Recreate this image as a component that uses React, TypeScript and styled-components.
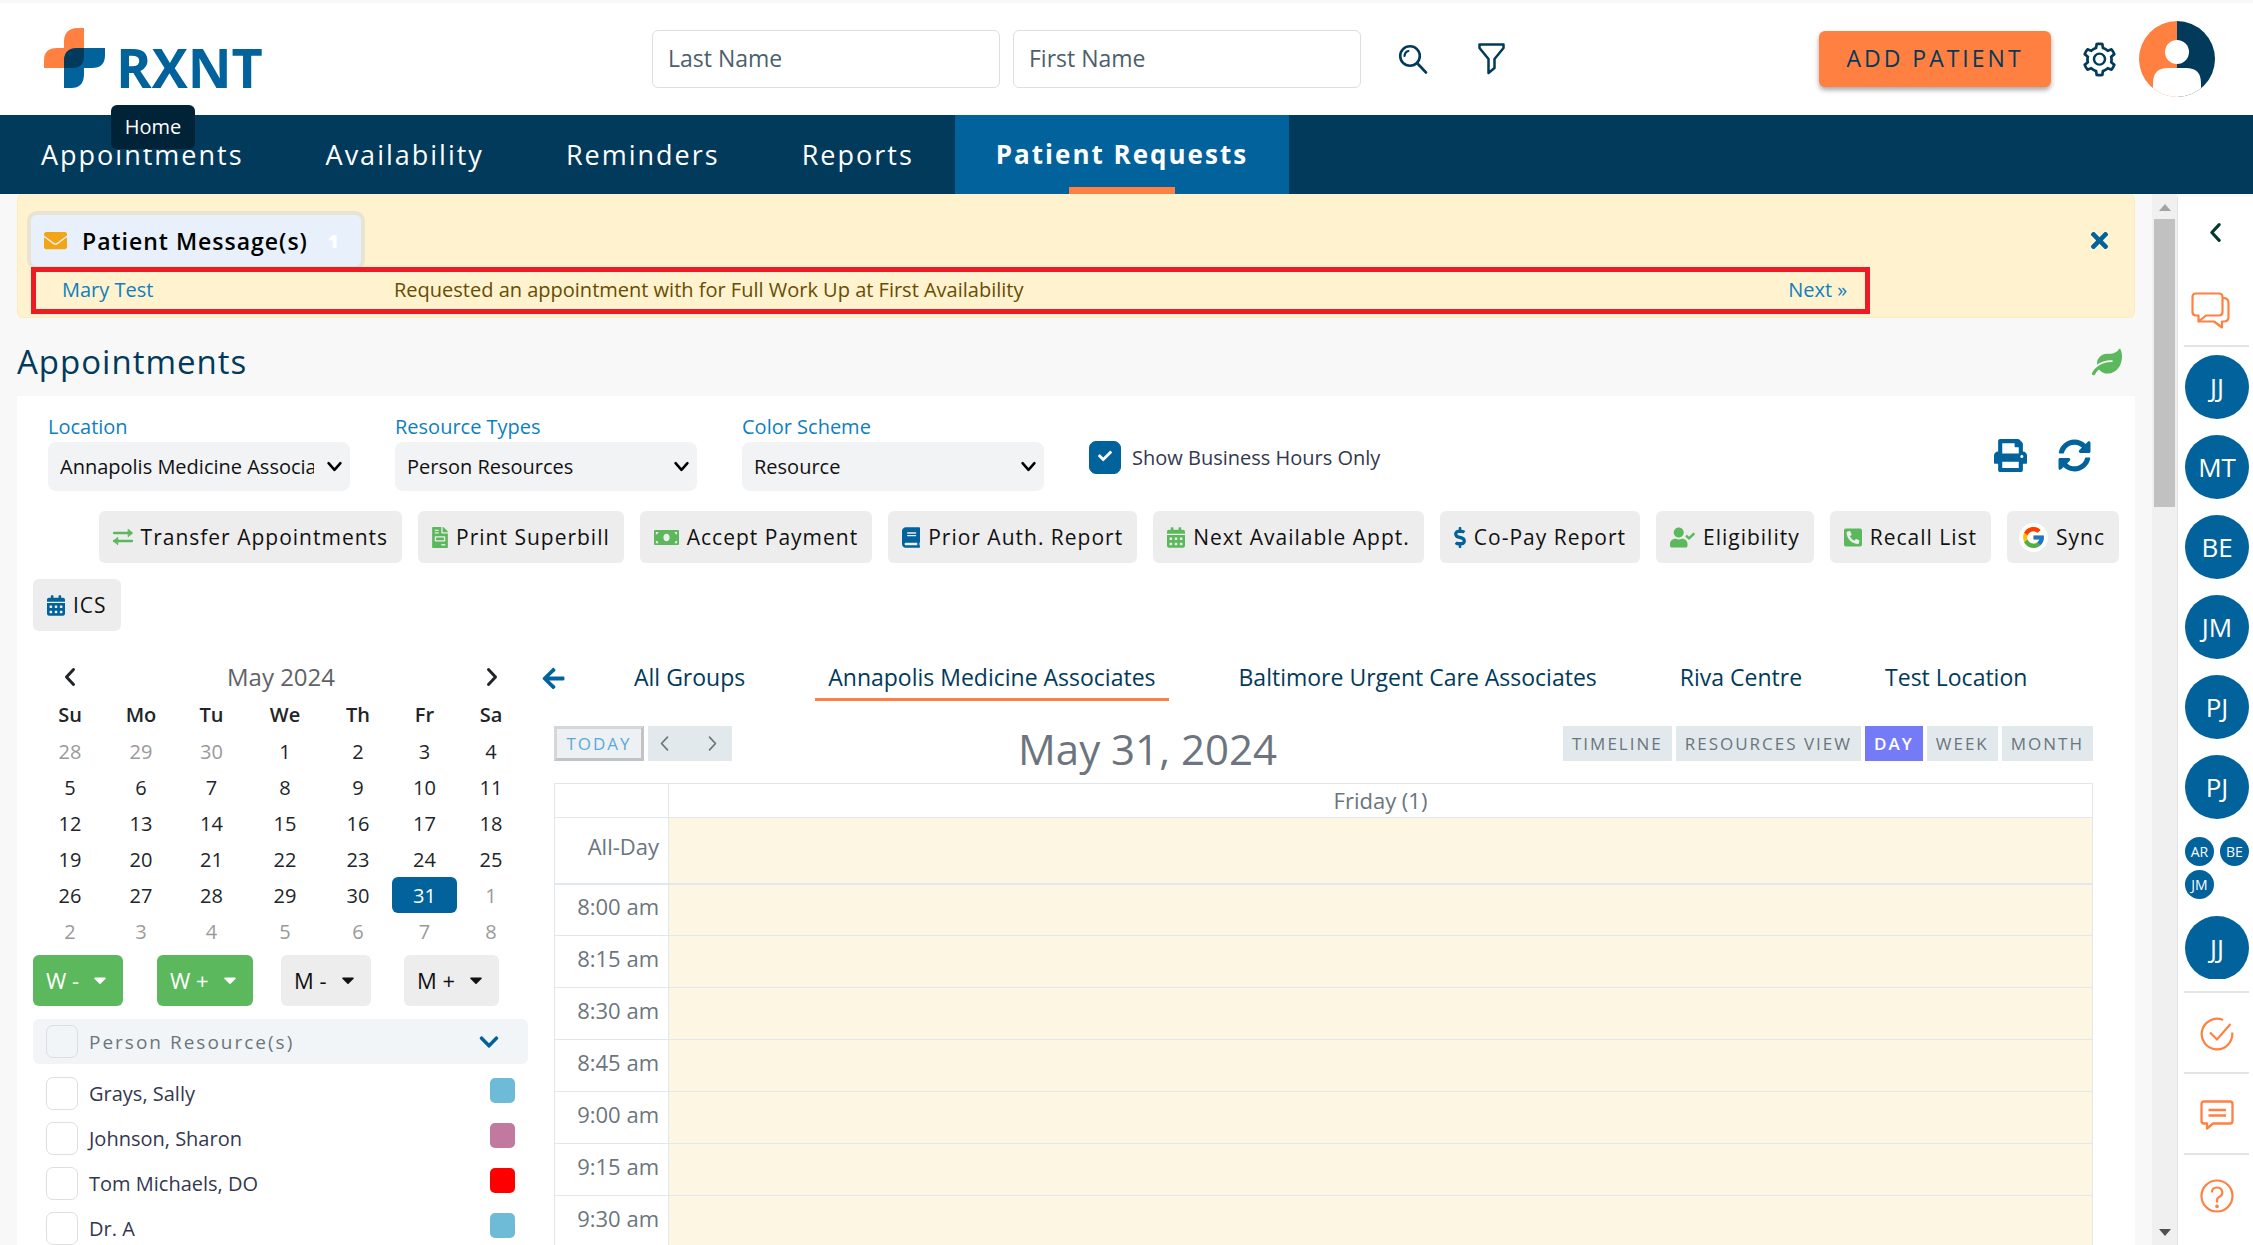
import React from "react";
import styled, { createGlobalStyle } from "styled-components";
import {
  FaArrowLeft, FaBook, FaCalendarAlt, FaCaretDown, FaCheck, FaChevronDown, FaDollarSign,
  FaEnvelope, FaFileInvoice, FaLeaf, FaMoneyBill, FaPhoneSquareAlt, FaPrint, FaSyncAlt, FaTimes, FaUserCheck,
} from "react-icons/fa";
import { FcGoogle } from "react-icons/fc";
import { AiOutlineSetting } from "react-icons/ai";

const c = {
  navy: "#023a5b",
  blue: "#01629c",
  link: "#0f7fc0",
  orange: "#ff8040",
  green: "#5cb85c",
  grey: "#6c757d",
  line: "#e1e8ed",
  cream: "#fdf6e2",
  page: "#f8f8f8",
};

const Global = createGlobalStyle`
  * { box-sizing: border-box; }
  body { margin: 0; background: ${c.page}; color: #212529; }
  body, button, input, select { font-family: "Open Sans", "Noto Sans", sans-serif; }
  button { border: 0; background: none; padding: 0; color: inherit; cursor: pointer; }
  a { color: ${c.link}; text-decoration: none; }
  svg { display: block; flex: none; }
`;

const Shell = styled.div`
  display: flex;
  flex-direction: column;
  height: 100vh;
  overflow: hidden;
`;

const Header = styled.header`
  position: relative;
  flex: none;
  display: grid;
  grid-template-columns: 652px 1fr auto;
  align-items: center;
  height: 115px;
  padding: 0 38px 0 0;
  border-top: 3px solid ${c.page};
  background: #fff;
`;

const Brand = styled.a`
  display: flex;
  gap: 11px;
  padding: 8px 0 0 44px;
  color: ${c.blue};
`;

const BrandName = styled.span`
  margin-top: 8px;
  font-size: 54px;
  font-weight: 700;
  line-height: 62px;
`;

const Tooltip = styled.div`
  position: absolute;
  z-index: 2;
  left: 111px;
  top: 102px;
  width: 84px;
  border-radius: 6px;
  background: #012338;
  color: #fff;
  font-size: 20px;
  line-height: 44px;
  text-align: center;
`;

const Search = styled.form`
  display: flex;
  align-items: center;
  gap: 13px;
`;

const SearchInput = styled.input`
  width: 348px;
  height: 58px;
  padding: 0 15px 2px;
  border: 1px solid #dcdee0;
  border-radius: 6px;
  color: ${c.navy};
  font-size: 23px;
  &::placeholder { color: #4c5f6c; opacity: 1; }
`;

const IconButton = styled.button<{ $gap?: number; $color?: string }>`
  display: flex;
  margin-left: ${(p) => p.$gap ?? 0}px;
  color: ${(p) => p.$color ?? c.navy};
`;

const Account = styled.div`
  display: flex;
  align-items: center;
`;

const AddPatient = styled.button`
  width: 232px;
  height: 56px;
  padding-bottom: 2px;
  border-radius: 6px;
  background: ${c.orange};
  box-shadow: 0 3px 5px rgba(0, 0, 0, 0.35);
  color: ${c.navy};
  font-size: 23px;
  font-weight: 500;
  letter-spacing: 3px;
`;

const Nav = styled.nav`
  flex: none;
  display: flex;
  height: 79px;
  background: ${c.navy};
`;

const NavLink = styled.a<{ $active?: boolean }>`
  display: flex;
  flex-direction: column;
  align-items: center;
  justify-content: space-between;
  padding: 0 41px;
  background: ${(p) => (p.$active ? c.blue : "transparent")};
  color: #fff;
  font-size: ${(p) => (p.$active ? 26 : 27)}px;
  font-weight: ${(p) => (p.$active ? 700 : 400)};
  letter-spacing: 2px;
  line-height: 79px;
  &::after {
    content: "";
    width: 106px;
    height: 7px;
    margin-top: -7px;
    background: ${(p) => (p.$active ? c.orange : "transparent")};
  }
`;

const Body = styled.div`
  flex: 1;
  min-height: 0;
  display: grid;
  grid-template-columns: minmax(0, 1fr) 25px 76px;
`;

const Main = styled.main`
  min-height: 0;
  overflow: hidden;
  padding: 0 17px;
`;

const Alert = styled.section`
  height: 124px;
  padding: 20px 13px 0;
  border: 1px solid #ffeabb;
  border-top: 0;
  border-radius: 6px;
  background: #fff2ce;
`;

const AlertTop = styled.div`
  display: flex;
  align-items: center;
  justify-content: space-between;
  height: 53px;
  padding-right: 9px;
`;

const AlertTab = styled.button`
  display: flex;
  align-items: center;
  width: 330px;
  height: 51px;
  padding: 0 13px;
  border-radius: 6px;
  background: #e8f1fb;
  box-shadow: 0 0 0 4px #e8e3d2;
  color: #000;
  font-size: 23px;
  font-weight: 600;
  letter-spacing: 1px;
  span { margin-left: 15px; }
`;

const Count = styled.b`
  margin-left: 20px;
  color: #fff;
  font-size: 18px;
`;

const MessageRow = styled.div`
  position: relative;
  display: grid;
  grid-template-columns: 332px 1fr auto;
  align-items: center;
  width: 88%;
  height: 47px;
  padding: 0 18px 3px 26px;
  border: 5px solid #ed1c24;
  background: #fff2ce;
  color: #664d03;
  font-size: 20px;
`;

const TitleRow = styled.div`
  display: flex;
  align-items: center;
  justify-content: space-between;
  height: 78px;
  padding: 10px 13px 0 0;
`;

const Title = styled.h1`
  margin: 0;
  color: ${c.navy};
  font-size: 33px;
  font-weight: 500;
  line-height: 40px;
  letter-spacing: 1px;
`;

const Panel = styled.section`
  padding: 16px 16px 0;
  background: #fff;
`;

const Filters = styled.div`
  display: flex;
  align-items: flex-start;
  gap: 45px;
  padding: 0 28px 0 15px;
`;

const Field = styled.label`
  display: flex;
  flex-direction: column;
  width: 302px;
  color: ${c.link};
  font-size: 20px;
  line-height: 30px;
`;

const SelectBox = styled.span`
  position: relative;
  display: block;
  color: #000;
  svg { position: absolute; right: 7px; top: 16px; pointer-events: none; }
`;

const Select = styled.select`
  width: 100%;
  height: 49px;
  padding: 0 36px 0 12px;
  border: 0;
  border-radius: 8px;
  background: #f1f3f5;
  appearance: none;
  color: #111;
  font-size: 20px;
`;

const CheckLabel = styled.label<{ $spaced?: boolean; $muted?: boolean }>`
  display: flex;
  align-items: center;
  gap: 11px;
  color: ${(p) => (p.$muted ? c.grey : "#33384f")};
  font-size: ${(p) => (p.$muted ? 19 : 20)}px;
  letter-spacing: ${(p) => (p.$muted ? 2 : 0)}px;
  margin-top: ${(p) => (p.$spaced ? 29 : 0)}px;
`;

const Tick = styled.span<{ $clear?: boolean }>`
  position: relative;
  display: flex;
  width: 32px;
  height: 33px;
  input {
    width: 100%;
    height: 100%;
    margin: 0;
    appearance: none;
    border: 1px solid #dcdee0;
    border-radius: 7px;
    background: ${(p) => (p.$clear ? "transparent" : "#fff")};
  }
  input:checked { border-color: ${c.blue}; background: ${c.blue}; }
  svg { position: absolute; left: 9px; top: 8px; color: #fff; }
`;

const PanelTools = styled.div`
  display: flex;
  gap: 31px;
  margin: 27px 0 0 auto;
`;

const Actions = styled.div<{ $end?: boolean }>`
  display: flex;
  justify-content: ${(p) => (p.$end ? "flex-end" : "flex-start")};
  gap: 16px;
  margin-top: ${(p) => (p.$end ? 20 : 16)}px;
`;

const Action = styled.button<{ $tint?: string; $glyph: number; $flush?: boolean }>`
  display: flex;
  align-items: center;
  gap: 8px;
  height: 52px;
  padding: 0 14px 0 ${(p) => (p.$flush ? 12 : 14)}px;
  border-radius: 6px;
  background: #ededed;
  color: #111;
  font-size: 21px;
  letter-spacing: 1px;
  white-space: nowrap;
  svg { width: ${(p) => p.$glyph}px; color: ${(p) => p.$tint ?? c.green}; }
`;

const GoogleBadge = styled.span`
  padding: 2px;
  border-radius: 50%;
  background: #fff;
`;

const Columns = styled.div`
  display: grid;
  grid-template-columns: 495px minmax(0, 1fr);
  gap: 13px;
  margin-top: 25px;
`;

const MonthHead = styled.div`
  display: flex;
  align-items: center;
  justify-content: space-between;
  height: 41px;
  padding: 0 26px 0 27px;
  color: #5f6368;
  font-size: 24px;
`;

const MonthTable = styled.table`
  width: 490px;
  margin-left: 2px;
  border-collapse: collapse;
  table-layout: fixed;
  font-size: 20px;
  text-align: center;
  th, td { height: 36px; padding: 0; line-height: 36px; }
  th { font-weight: 600; }
`;

const Day = styled.button<{ $outside?: boolean; $chosen?: boolean }>`
  display: block;
  width: 100%;
  height: 36px;
  border-radius: 6px;
  background: ${(p) => (p.$chosen ? c.blue : "transparent")};
  color: ${(p) => (p.$chosen ? "#fff" : p.$outside ? "#9a9a9a" : "#212529")};
  font-size: 20px;
`;

const Jumps = styled.div`
  display: grid;
  grid-template-columns: 124px 124px 123px 124px;
  justify-items: start;
  padding-top: 6px;
`;

const Jump = styled.button<{ $green?: boolean }>`
  display: flex;
  align-items: center;
  gap: 11px;
  height: 51px;
  padding: 0 13px 2px;
  border-radius: 6px;
  background: ${(p) => (p.$green ? c.green : "#ededed")};
  color: ${(p) => (p.$green ? "#fff" : "#111")};
  font-size: 22px;
`;

const ResourceHead = styled.div`
  display: flex;
  align-items: center;
  justify-content: space-between;
  height: 45px;
  margin-top: 13px;
  padding: 0 28px 0 13px;
  border-radius: 6px;
  background: #f1f5f7;
`;

const ResourceList = styled.ul`
  margin: 7px 0 0;
  padding: 0 13px;
  list-style: none;
`;

const ResourceItem = styled.li`
  display: flex;
  align-items: center;
  justify-content: space-between;
  height: 45px;
`;

const Swatch = styled.i<{ $fill: string }>`
  width: 25px;
  height: 25px;
  margin-bottom: 7px;
  border-radius: 5px;
  background: ${(p) => p.$fill};
`;

const Tabs = styled.div`
  display: flex;
  align-items: center;
  height: 45px;
`;

const TabList = styled.div`
  display: flex;
  gap: 57px;
  margin-left: 55px;
`;

const Tab = styled.button<{ $active?: boolean }>`
  height: 45px;
  padding: 0 13px;
  border-bottom: 3px solid ${(p) => (p.$active ? c.orange : "transparent")};
  color: ${c.navy};
  font-size: 23px;
  font-weight: ${(p) => (p.$active ? 500 : 400)};
  white-space: nowrap;
`;

const Scheduler = styled.div`
  padding: 25px 26px 0 13px;
`;

const Toolbar = styled.div`
  display: flex;
  justify-content: space-between;
  align-items: flex-start;
  height: 57px;
`;

const ToolGroup = styled.div`
  display: flex;
  gap: 4px;
`;

const Tool = styled.button<{ $active?: boolean }>`
  height: 35px;
  padding: 0 9px;
  background: ${(p) => (p.$active ? "#757bf7" : "#e2e9ec")};
  color: ${(p) => (p.$active ? "#fff" : c.grey)};
  font-size: 17px;
  font-weight: ${(p) => (p.$active ? 600 : 400)};
  letter-spacing: 2px;
  white-space: nowrap;
`;

const Today = styled.button`
  width: 90px;
  height: 35px;
  border: 3px solid;
  border-color: #d3d7da #c0c4c7 #c0c4c7 #d3d7da;
  background: #edf1f4;
  color: #5ba8d8;
  font-size: 17px;
  letter-spacing: 2px;
`;

const Pager = styled.div`
  display: flex;
  align-items: center;
  justify-content: space-between;
  width: 84px;
  height: 35px;
  padding: 0 11px 0 8px;
  background: #e2e9ec;
  color: ${c.grey};
`;

const DateTitle = styled.h2`
  margin: 1px 0 0;
  color: ${c.grey};
  font-size: 42px;
  font-weight: 400;
  line-height: 44px;
`;

const Slots = styled.table`
  width: 100%;
  border-collapse: collapse;
  color: ${c.grey};
  font-size: 22px;
  th, td { padding: 0; border: 1px solid ${c.line}; font-weight: 400; }
  th { line-height: 30px; }
  th:first-child { width: 114px; padding-right: 9px; text-align: right; }
  thead tr { height: 34px; }
  thead th { padding-bottom: 2px; }
  tbody td { background: ${c.cream}; }
`;

const SlotRow = styled.tr<{ $allDay?: boolean }>`
  height: ${(p) => (p.$allDay ? 66 : 52)}px;
  th, td { border-bottom-width: ${(p) => (p.$allDay ? 2 : 1)}px; }
  th { padding-bottom: 8px; }
`;

const ScrollTrack = styled.div`
  display: flex;
  flex-direction: column;
  justify-content: space-between;
  align-items: center;
  padding: 10px 0 9px;
  background: #f0f0f0;
`;

const ScrollThumb = styled.div`
  width: 21px;
  height: 288px;
  margin: 8px 0 auto;
  background: #c1c1c1;
`;

const Rail = styled.aside`
  display: flex;
  flex-direction: column;
  min-height: 0;
  margin-top: 3px;
  padding: 25px 4px 0 6px;
  border-left: 1px solid #e4e4e4;
  background: #fff;
  color: ${c.orange};
`;

const RailTop = styled.div`
  display: flex;
  flex-direction: column;
  gap: 49px;
  height: 125px;
  border-bottom: 2px solid #e4e4e4;
  padding-left: 7px;
  button:first-child { margin-left: 14px; }
`;

const People = styled.div`
  display: grid;
  justify-items: end;
  align-content: start;
  gap: 16px;
  height: 632px;
  padding-top: 8px;
  overflow: hidden;
`;

const Person = styled.button<{ $small?: boolean }>`
  width: ${(p) => (p.$small ? 29 : 64)}px;
  height: ${(p) => (p.$small ? 29 : 64)}px;
  border-radius: 50%;
  background: ${c.blue};
  color: #fff;
  font-size: ${(p) => (p.$small ? 14 : 26)}px;
`;

const Cluster = styled.div`
  display: grid;
  grid-template-columns: 29px 29px;
  gap: 3px 6px;
  height: 65px;
  padding-top: 2px;
`;

const RailItem = styled.button`
  display: flex;
  align-items: center;
  justify-content: center;
  height: 81px;
  padding-top: 2px;
  border-top: 2px solid #e4e4e4;
  color: ${c.orange};
`;

const RailEnd = styled.div`
  display: flex;
  flex-direction: column;
  padding-top: 12px;
`;

const LogoMark = () => (
  <svg width="61" height="60" viewBox="0 0 61 60" aria-hidden="true">
    <path fill={c.orange} d="M20 20V14Q20 0 34 0H40V40H0V32Q0 20 13 20Z" />
    <path fill={c.blue} d="M34 20H61V27Q61 40 48 40H40V46Q40 60 27 60H20V33Q20 20 34 20Z" />
    <path fill={c.navy} d="M34 20H40V28Q40 40 28 40H20V33Q20 20 34 20Z" />
  </svg>
);

const SearchIcon = () => (
  <svg width="30" height="30" viewBox="0 0 30 30" fill="none" stroke="currentColor" strokeWidth="2.6" strokeLinecap="round">
    <circle cx="12" cy="12" r="9.8" />
    <path d="M19 19 28 28.500" />
    <path d="M6.5 12Q7 7.5 10.5 7" strokeWidth="2.2" />
  </svg>
);

const FunnelIcon = () => (
  <svg width="27" height="32" viewBox="0 0 27 32" fill="none" stroke="currentColor" strokeWidth="2.5" strokeLinejoin="round">
    <path d="M1.5 1.5H25.5V5L16.5 16V25L10.5 30V16L1.5 5Z" />
  </svg>
);

const Avatar = () => (
  <svg width="76" height="76" viewBox="0 0 76 76">
    <defs><clipPath id="face"><circle cx="38" cy="38" r="38" /></clipPath></defs>
    <g clipPath="url(#face)">
      <path fill={c.orange} d="M0 0H38V76H0Z" />
      <path fill={c.navy} d="M38 0H76V76H38Z" />
      <circle cx="38" cy="31" r="12" fill="#fff" />
      <path fill="#fff" d="M14 76V62Q14 47 29 47H47Q62 47 62 62V76Z" />
    </g>
  </svg>
);

const SwapIcon = () => (
  <svg height="16" viewBox="0 0 20 16" fill="none" stroke="currentColor" strokeWidth="2.4" strokeLinecap="round" strokeLinejoin="round">
    <path d="M1 4H18M1 12H19" />
    <path fill="currentColor" strokeWidth="1" d="M15.500 .5 19.500 4 15.500 7.500ZM4.500 8.500 .5 12 4.500 15.500Z" />
  </svg>
);

const Chevron = ({ size = 20, dir = "left", weight = 3 }: { size?: number; dir?: "left" | "right" | "down"; weight?: number }) => (
  <svg width={size} height={size} viewBox="0 0 20 20" fill="none" stroke="currentColor" strokeWidth={weight} strokeLinecap="round" strokeLinejoin="round">
    <path d={dir === "left" ? "M13.500 2.500 6.500 10 13.500 17.500" : dir === "right" ? "M6.500 2.500 13.500 10 6.500 17.500" : "M3 6 10 14 17 6"} />
  </svg>
);

const ChatIcon = () => (
  <svg width="39" height="37" viewBox="0 0 39 37" fill="none" stroke="currentColor" strokeWidth="2.200" strokeLinejoin="round">
    <path d="M5 1.500H28Q31.500 1.500 31.500 5V20Q31.500 23.500 28 23.500H15L7.500 29.500V23.500H5Q1.500 23.500 1.500 20V5Q1.500 1.500 5 1.500Z" />
    <path d="M31.500 6H33Q37.500 6.500 37.500 11V25Q37.500 29.500 33 29.500H31V35.500L23 29.500H8" />
  </svg>
);

const DoneIcon = () => (
  <svg width="34" height="34" viewBox="0 0 34 34" fill="none" stroke="currentColor" strokeWidth="2.200">
    <path d="M23 3A15.300 15.300 0 1 0 32.200 15.500" />
    <path d="M10 15.500 17 22.500 30.500 7" />
  </svg>
);

const NoteIcon = () => (
  <svg width="34" height="30" viewBox="0 0 34 30" fill="none" stroke="currentColor" strokeWidth="2.300" strokeLinejoin="round">
    <path d="M4 1.500H30Q32.500 1.500 32.500 4V21Q32.500 23.500 30 23.500H13L7 28.500V23.500H4Q1.500 23.500 1.500 21V4Q1.500 1.500 4 1.500Z" />
    <path d="M8.500 10H26M8.500 15.500H26" />
  </svg>
);

const HelpIcon = () => (
  <svg width="34" height="34" viewBox="0 0 34 34" fill="none" stroke="currentColor" strokeWidth="2.200">
    <circle cx="17" cy="17" r="15.500" />
    <path d="M11.800 13.500Q12 8.500 17 8.500T22.300 13.500Q22.300 16.500 19.500 17.800Q17 19 17 21V23.500" />
    <circle cx="17" cy="27.300" r="0.800" fill="currentColor" />
  </svg>
);

const Triangle = ({ up }: { up?: boolean }) => (
  <svg width="12" height="7" viewBox="0 0 12 7"><path fill={up ? "#a3a3a3" : "#505050"} d={up ? "M0 7 6 0 12 7Z" : "M0 0 6 7 12 0Z"} /></svg>
);

const actions = [
  { text: "Transfer Appointments", icon: <SwapIcon />, glyph: 20 },
  { text: "Print Superbill", icon: <FaFileInvoice size={21} />, glyph: 16 },
  { text: "Accept Payment", icon: <FaMoneyBill size={21} />, glyph: 25 },
  { text: "Prior Auth. Report", icon: <FaBook size={21} />, glyph: 18, tint: c.blue },
  { text: "Next Available Appt.", icon: <FaCalendarAlt size={21} />, glyph: 18 },
  { text: "Co-Pay Report", icon: <FaDollarSign size={21} />, glyph: 12, tint: c.blue },
  { text: "Eligibility", icon: <FaUserCheck size={21} />, glyph: 25 },
  { text: "Recall List", icon: <FaPhoneSquareAlt size={21} />, glyph: 18 },
];

const weekDays = ["Su", "Mo", "Tu", "We", "Th", "Fr", "Sa"];
const dayWidths = [70, 72, 69, 78, 68, 65, 68];
const weeks = Array.from({ length: 6 }, (_, w) =>
  Array.from({ length: 7 }, (_, d) => {
    const n = w * 7 + d - 2;
    return n < 1 ? { day: 30 + n, outside: true } : n > 31 ? { day: n - 31, outside: true } : { day: n, outside: false };
  })
);

const resources = [
  ["Grays, Sally", "#6dbbd6"],
  ["Johnson, Sharon", "#c1799f"],
  ["Tom Michaels, DO", "#ff0000"],
  ["Dr. A", "#6dbbd6"],
];

const groups = ["All Groups", "Annapolis Medicine Associates", "Baltimore Urgent Care Associates", "Riva Centre", "Test Location"];
const views = ["TIMELINE", "RESOURCES VIEW", "DAY", "WEEK", "MONTH"];
const times = ["8:00 am", "8:15 am", "8:30 am", "8:45 am", "9:00 am", "9:15 am", "9:30 am"];

const Dropdown = ({ label, value }: { label: string; value: string }) => (
  <Field>
    {label}
    <SelectBox>
      <Select defaultValue={value}><option>{value}</option></Select>
      <Chevron size={17} dir="down" />
    </SelectBox>
  </Field>
);

export default function App() {
  return (
    <Shell>
      <Global />
      <Header>
        <Brand href="#"><LogoMark /><BrandName>RXNT</BrandName></Brand>
        <Tooltip role="tooltip">Home</Tooltip>
        <Search>
          <SearchInput aria-label="Last Name" placeholder="Last Name" />
          <SearchInput aria-label="First Name" placeholder="First Name" />
          <IconButton type="button" aria-label="Search" $gap={24}><SearchIcon /></IconButton>
          <IconButton type="button" aria-label="Filter" $gap={37}><FunnelIcon /></IconButton>
        </Search>
        <Account>
          <AddPatient>ADD PATIENT</AddPatient>
          <IconButton aria-label="Settings" $gap={29}><AiOutlineSetting size={39} /></IconButton>
          <IconButton aria-label="Account" $gap={20}><Avatar /></IconButton>
        </Account>
      </Header>
      <Nav>
        {["Appointments", "Availability", "Reminders", "Reports", "Patient Requests"].map((n) => (
          <NavLink key={n} href="#" $active={n === "Patient Requests"}>{n}</NavLink>
        ))}
      </Nav>
      <Body>
        <Main>
          <Alert>
            <AlertTop>
              <AlertTab><FaEnvelope size={23} color="#f2a516" /><span>Patient Message(s)</span><Count>1</Count></AlertTab>
              <IconButton aria-label="Dismiss" $color={c.blue}><FaTimes size={25} /></IconButton>
            </AlertTop>
            <MessageRow>
              <a href="#">Mary Test</a>
              <span>Requested an appointment with for Full Work Up at First Availability</span>
              <a href="#">Next »</a>
            </MessageRow>
          </Alert>
          <TitleRow><Title>Appointments</Title><FaLeaf size={30} color={c.green} /></TitleRow>
          <Panel>
            <Filters>
              <Dropdown label="Location" value="Annapolis Medicine Associates" />
              <Dropdown label="Resource Types" value="Person Resources" />
              <Dropdown label="Color Scheme" value="Resource" />
              <CheckLabel $spaced>
                <Tick><input type="checkbox" defaultChecked /><FaCheck size={14} /></Tick>
                Show Business Hours Only
              </CheckLabel>
              <PanelTools>
                <IconButton aria-label="Print" $color={c.blue}><FaPrint size={33} /></IconButton>
                <IconButton aria-label="Refresh" $color={c.blue}><FaSyncAlt size={33} /></IconButton>
              </PanelTools>
            </Filters>
            <Actions $end>
              {actions.map((a) => <Action key={a.text} $glyph={a.glyph} $tint={a.tint}>{a.icon}{a.text}</Action>)}
              <Action $flush $glyph={25}><GoogleBadge><FcGoogle size={25} /></GoogleBadge>Sync</Action>
            </Actions>
            <Actions><Action $glyph={18} $tint={c.blue}><FaCalendarAlt size={21} />ICS</Action></Actions>
            <Columns>
              <div>
                <MonthHead>
                  <IconButton aria-label="Previous month" $color="#212529"><Chevron /></IconButton>
                  May 2024
                  <IconButton aria-label="Next month" $color="#212529"><Chevron dir="right" /></IconButton>
                </MonthHead>
                <MonthTable>
                  <colgroup>{dayWidths.map((w, i) => <col key={i} width={w} />)}</colgroup>
                  <thead><tr>{weekDays.map((d) => <th key={d}>{d}</th>)}</tr></thead>
                  <tbody>
                    {weeks.map((week, i) => (
                      <tr key={i}>
                        {week.map((d) => (
                          <td key={d.day}><Day $outside={d.outside} $chosen={d.day === 31}>{d.day}</Day></td>
                        ))}
                      </tr>
                    ))}
                  </tbody>
                </MonthTable>
                <Jumps>
                  {["W -", "W +", "M -", "M +"].map((j) => (
                    <Jump key={j} $green={j[0] === "W"}>{j}<FaCaretDown size={20} /></Jump>
                  ))}
                </Jumps>
                <ResourceHead>
                  <CheckLabel $muted><Tick $clear><input type="checkbox" /></Tick>Person Resource(s)</CheckLabel>
                  <IconButton aria-label="Collapse" $color={c.blue}><FaChevronDown size={22} /></IconButton>
                </ResourceHead>
                <ResourceList>
                  {resources.map(([name, fill]) => (
                    <ResourceItem key={name}>
                      <CheckLabel><Tick><input type="checkbox" /></Tick>{name}</CheckLabel>
                      <Swatch $fill={fill} />
                    </ResourceItem>
                  ))}
                </ResourceList>
              </div>
              <div>
                <Tabs>
                  <IconButton aria-label="Back" $color={c.blue}><FaArrowLeft size={25} /></IconButton>
                  <TabList role="tablist">
                    {groups.map((g, i) => <Tab key={g} role="tab" $active={i === 1}>{g}</Tab>)}
                  </TabList>
                </Tabs>
                <Scheduler>
                  <Toolbar>
                    <ToolGroup>
                      <Today>TODAY</Today>
                      <Pager>
                        <button aria-label="Previous day"><Chevron size={17} weight={2} /></button>
                        <button aria-label="Next day"><Chevron size={17} weight={2} dir="right" /></button>
                      </Pager>
                    </ToolGroup>
                    <DateTitle>May 31, 2024</DateTitle>
                    <ToolGroup>
                      {views.map((v) => <Tool key={v} $active={v === "DAY"}>{v}</Tool>)}
                    </ToolGroup>
                  </Toolbar>
                  <Slots>
                    <thead><tr><th></th><th>Friday (1)</th></tr></thead>
                    <tbody>
                      <SlotRow $allDay><th>All-Day</th><td /></SlotRow>
                      {times.map((t) => <SlotRow key={t}><th>{t}</th><td /></SlotRow>)}
                    </tbody>
                  </Slots>
                </Scheduler>
              </div>
            </Columns>
          </Panel>
        </Main>
        <ScrollTrack><Triangle up /><ScrollThumb /><Triangle /></ScrollTrack>
        <Rail>
          <RailTop>
            <IconButton aria-label="Expand" $color="#023a2b"><Chevron size={21} /></IconButton>
            <IconButton aria-label="Chats" $color={c.orange}><ChatIcon /></IconButton>
          </RailTop>
          <People>
            {["JJ", "MT", "BE", "JM", "PJ", "PJ"].map((p, i) => <Person key={i}>{p}</Person>)}
            <Cluster>{["AR", "BE", "JM"].map((p) => <Person key={p} $small>{p}</Person>)}</Cluster>
            <Person>JJ</Person>
          </People>
          <RailEnd>
            <RailItem aria-label="Tasks"><DoneIcon /></RailItem>
            <RailItem aria-label="Messages"><NoteIcon /></RailItem>
            <RailItem aria-label="Help"><HelpIcon /></RailItem>
          </RailEnd>
        </Rail>
      </Body>
    </Shell>
  );
}
